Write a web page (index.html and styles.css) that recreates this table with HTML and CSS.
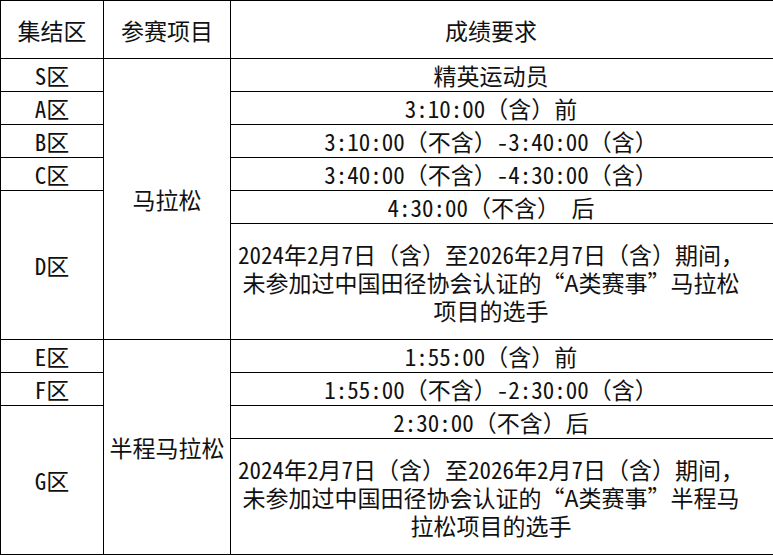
FILE: index.html
```html
<!DOCTYPE html>
<html lang="zh-CN">
<head>
<meta charset="utf-8">
<link rel="stylesheet" href="styles.css">
</head>
<body>
<table class="grid">
  <colgroup>
    <col class="c-zone">
    <col class="c-event">
    <col class="c-req">
  </colgroup>
  <tr class="r-head">
    <th>集结区</th>
    <th>参赛项目</th>
    <th class="req">成绩要求</th>
  </tr>
  <tr class="r-one">
    <td><span class="n">S</span>区</td>
    <td rowspan="6">马拉松</td>
    <td class="req">精英运动员</td>
  </tr>
  <tr class="r-one">
    <td><span class="n">A</span>区</td>
    <td class="req"><span class="n">3:10:00</span>（含）前</td>
  </tr>
  <tr class="r-one">
    <td><span class="n">B</span>区</td>
    <td class="req"><span class="n">3:10:00</span>（不含）<span class="n">-3:40:00</span>（含）</td>
  </tr>
  <tr class="r-one">
    <td><span class="n">C</span>区</td>
    <td class="req"><span class="n">3:40:00</span>（不含）<span class="n">-4:30:00</span>（含）</td>
  </tr>
  <tr class="r-one">
    <td rowspan="2"><span class="n">D</span>区</td>
    <td class="req"><span class="n">4:30:00</span>（不含）<span class="n"> </span>后</td>
  </tr>
  <tr class="r-long">
    <td class="req long"><span class="n">2024</span>年<span class="n">2</span>月<span class="n">7</span>日（含）至<span class="n">2026</span>年<span class="n">2</span>月<span class="n">7</span>日（含）期间，<br>未参加过中国田径协会认证的“A类赛事”马拉松<br>项目的选手</td>
  </tr>
  <tr class="r-one">
    <td><span class="n">E</span>区</td>
    <td rowspan="4">半程马拉松</td>
    <td class="req"><span class="n">1:55:00</span>（含）前</td>
  </tr>
  <tr class="r-one">
    <td><span class="n">F</span>区</td>
    <td class="req"><span class="n">1:55:00</span>（不含）<span class="n">-2:30:00</span>（含）</td>
  </tr>
  <tr class="r-one">
    <td rowspan="2"><span class="n">G</span>区</td>
    <td class="req"><span class="n">2:30:00</span>（不含）后</td>
  </tr>
  <tr class="r-long">
    <td class="req long"><span class="n">2024</span>年<span class="n">2</span>月<span class="n">7</span>日（含）至<span class="n">2026</span>年<span class="n">2</span>月<span class="n">7</span>日（含）期间，<br>未参加过中国田径协会认证的“A类赛事”半程马<br>拉松项目的选手</td>
  </tr>
</table>
</body>
</html>
```

FILE: styles.css
```css
html, body {
  margin: 0;
  padding: 0;
  background: #ffffff;
}

.grid {
  border-collapse: collapse;
  table-layout: fixed;
  width: 773px;
  font-family: "Noto Sans CJK SC", "Noto Sans", sans-serif;
  font-size: 23px;
  color: #111111;
}

.c-zone { width: 103px; }
.c-event { width: 127px; }
.c-req { width: 543px; }

.grid th,
.grid td {
  border: 1px solid #000000;
  padding: 0;
  text-align: center;
  vertical-align: middle;
  font-weight: 400;
  line-height: 28px;
  white-space: nowrap;
}

.grid .req {
  padding-right: 22px;
}

.n {
  font-feature-settings: "hwid" 1;
  white-space: pre;
}

.r-head { height: 58px; }
.r-one { height: 33px; }
.r-long { height: 116px; }

.grid td.long {
  line-height: 28px;
}
```
